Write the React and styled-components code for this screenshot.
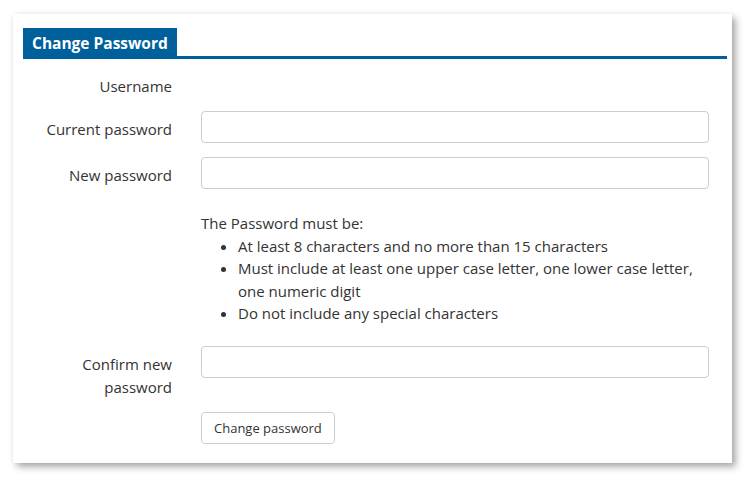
import React from 'react';
import styled, { createGlobalStyle } from 'styled-components';

const GlobalStyle = createGlobalStyle`
  body {
    margin: 0;
    background: #ffffff;
    font-family: 'Open Sans', 'Liberation Sans', sans-serif;
    color: #333333;
  }
`

const Page = styled.div`
  padding: 14px 0 20px 13px;
`

const Panel = styled.div`
  width: 719px;
  box-sizing: border-box;
  background: #ffffff;
  padding: 14px 5px 19px 10px;
  box-shadow: 4px 4px 7px rgba(0, 0, 0, 0.32), 0 0 5px rgba(0, 0, 0, 0.07);
`

const TabBar = styled.div`
  display: flex;
  border-bottom: 3px solid #00609c;
`

const Tab = styled.div`
  height: 28px;
  line-height: 30px;
  padding: 0 9px;
  background: #00609c;
  color: #ffffff;
  font-weight: 700;
  font-size: 15.5px;
`

const Form = styled.form`
  display: flex;
  flex-direction: column;
  gap: 14px;
  padding: 10px 18px 0 0;
  font-size: 15px;
  line-height: 22.4px;
`

const Row = styled.div`
  display: grid;
  grid-template-columns: 149px 1fr;
  column-gap: 29px;
  align-items: start;
`

const Label = styled.label`
  display: block;
  text-align: right;
  padding-top: ${(p) => p.$top || '7px'};
`

const Input = styled.input`
  height: 32px;
  box-sizing: border-box;
  width: 100%;
  border: 1px solid #cccccc;
  border-radius: 4px;
  background: #ffffff;
  font: inherit;
  padding: 0 8px;
`

const Help = styled.div`
  grid-column: 2;
  padding: 9px 0 8px;
`

const Rules = styled.ul`
  margin: 0;
  padding-left: 37px;
  list-style: disc;
`

const Button = styled.button`
  grid-column: 2;
  justify-self: start;
  height: 32px;
  box-sizing: border-box;
  padding: 0 12px;
  border: 1px solid #cccccc;
  border-radius: 4px;
  background: #ffffff;
  color: #333333;
  font-family: inherit;
  font-size: 13px;
`

const App = () => {
    return (
        <>
            <GlobalStyle />
            <Page>
                <Panel>
                    <TabBar>
                        <Tab>Change Password</Tab>
                    </TabBar>
                    <Form onSubmit={(e) => e.preventDefault()}>
                        <Row>
                            <Label $top="6px">Username</Label>
                        </Row>
                        <Row>
                            <Label>Current password</Label>
                            <Input type="password" />
                        </Row>
                        <Row>
                            <Label>New password</Label>
                            <Input type="password" />
                        </Row>
                        <Row>
                            <Help>
                                The Password must be:
                                <Rules>
                                    <li>At least 8 characters and no more than 15 characters</li>
                                    <li>Must include at least one upper case letter, one lower case letter, one numeric digit</li>
                                    <li>Do not include any special characters</li>
                                </Rules>
                            </Help>
                        </Row>
                        <Row>
                            <Label>Confirm new<br />password</Label>
                            <Input type="password" />
                        </Row>
                        <Row>
                            <Button type="submit">Change password</Button>
                        </Row>
                    </Form>
                </Panel>
            </Page>
        </>
    )
}

export default App;
